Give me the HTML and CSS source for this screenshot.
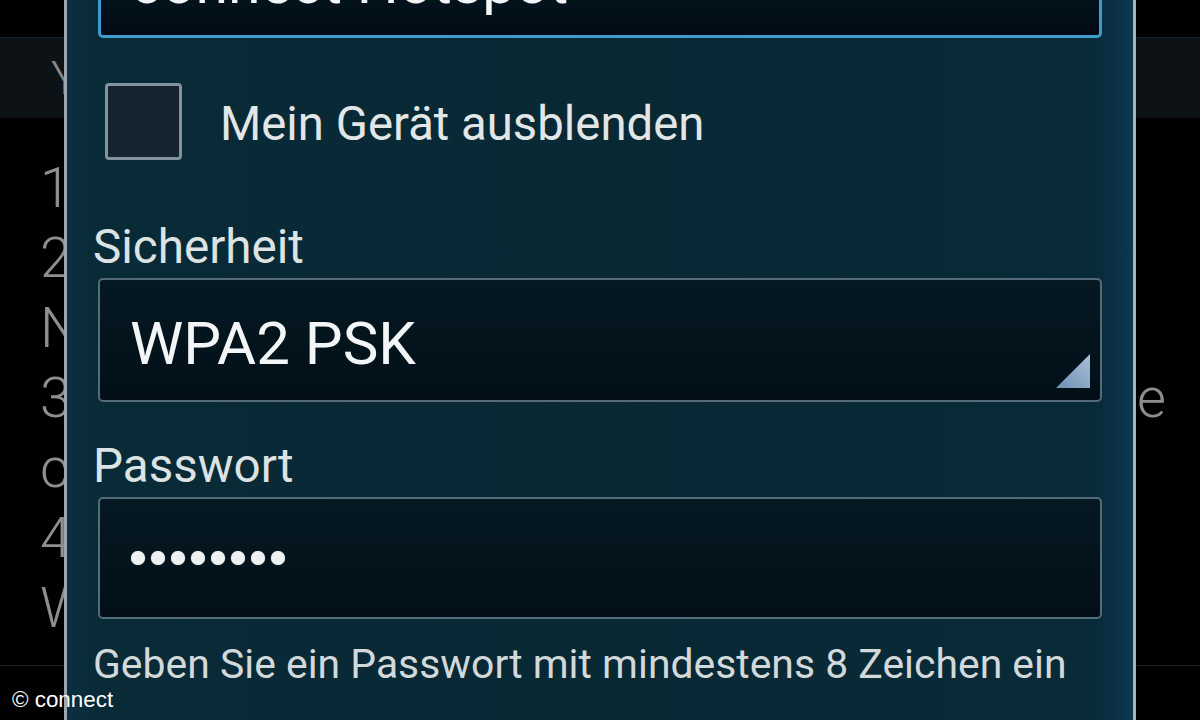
FILE: index.html
```html
<!DOCTYPE html>
<html lang="de">
<head>
<meta charset="utf-8">
<title>Mobiler Hotspot einrichten</title>
<link rel="stylesheet" href="styles.css">
</head>
<body>
<div class="screen">
  <div class="statusbar"></div>
  <div class="actionbar"><span class="ab-title">Y</span></div>
  <ol class="steps">
    <li class="step">1</li>
    <li class="step">2</li>
    <li class="step">N</li>
    <li class="step step-split"><span>3</span><span>e</span></li>
    <li class="step">c</li>
    <li class="step">4</li>
    <li class="step">W</li>
  </ol>
  <div class="bottombar"></div>

  <div class="dialog">
    <div class="field field-focused">connect Hotspot</div>

    <div class="check-row">
      <div class="checkbox"></div>
      <div class="check-label">Mein Gerät ausblenden</div>
    </div>

    <div class="label">Sicherheit</div>
    <div class="field field-spinner">
      WPA2 PSK
      <svg class="spinner-arrow" viewBox="0 0 34 34" width="34" height="34" aria-hidden="true">
        <defs>
          <linearGradient id="tri" x1="0" y1="1" x2="1" y2="0">
            <stop offset="0" stop-color="#6f8fb3"/>
            <stop offset="1" stop-color="#a9c0d8"/>
          </linearGradient>
        </defs>
        <polygon points="34,0 34,34 0,34" fill="url(#tri)"/>
      </svg>
    </div>

    <div class="label label-pw">Passwort</div>
    <div class="field field-pw">
      <div class="dots">
        <span class="dot"></span><span class="dot"></span><span class="dot"></span><span class="dot"></span>
        <span class="dot"></span><span class="dot"></span><span class="dot"></span><span class="dot"></span>
      </div>
    </div>

    <div class="helper">Geben Sie ein Passwort mit mindestens 8 Zeichen ein</div>
  </div>

  <div class="copyright">© connect</div>
</div>
</body>
</html>
```

FILE: styles.css
```css
* {
  box-sizing: border-box;
  margin: 0;
  padding: 0;
}

html,
body {
  width: 1200px;
  height: 720px;
  overflow: hidden;
  background: #000;
}

body {
  font-family: Roboto, "Noto Sans", "DejaVu Sans", sans-serif;
}

.screen {
  position: relative;
  width: 1200px;
  height: 720px;
  overflow: hidden;
  background: #000;
}

/* background page (behind the dialog) */
.statusbar {
  height: 37px;
  background: #000;
}

.actionbar {
  height: 81px;
  background: #0d1216;
  border-top: 1px solid #1d2428;
  display: flex;
  align-items: center;
  padding-left: 51px;
}

.ab-title {
  font-size: 46px;
  font-weight: 300;
  color: #8a8a8a;
}

.steps {
  list-style: none;
  padding: 35px 34px 0 40px;
  font-size: 56px;
  font-weight: 300;
  line-height: 70px;
  color: #8e8e8e;
}

.step {
  display: flex;
  white-space: nowrap;
  height: 70px;
}

.step-split {
  justify-content: space-between;
}

.bottombar {
  margin-top: 22px;
  border-top: 1px solid #1b1e20;
}

/* dialog */
.dialog {
  position: absolute;
  left: 64px;
  top: -100px;
  width: 1072px;
  height: 860px;
  padding: 14px 31px 0;
  border-left: 3px solid #9aa6ac;
  border-right: 3px solid #aab2b6;
  background: linear-gradient(to right, #0c2f42 0px, #092a37 24px, #082834 50%, #092a38 1028px, #0c3652 1066px);
}

.field {
  position: relative;
  height: 124px;
  border: 2px solid #566b78;
  border-radius: 5px;
  background: linear-gradient(#051922, #020f18);
  display: flex;
  align-items: center;
  padding: 6px 0 0 30px;
  font-size: 60px;
  color: #f3f5f6;
  white-space: nowrap;
}

.field-focused {
  border: 3px solid #3d9ccf;
  background: linear-gradient(#04161f 60%, #000a14);
  padding-top: 12px;
  font-size: 59px;
}

.field-pw {
  height: 122px;
  padding-top: 0;
}

.spinner-arrow {
  position: absolute;
  right: 10px;
  bottom: 12px;
}

.check-row {
  display: flex;
  align-items: center;
  margin-top: 45px;
}

.checkbox {
  flex: none;
  width: 77px;
  height: 77px;
  margin-left: 7px;
  border: 3px solid #8293a0;
  border-radius: 4px;
  background: #15232e;
}

.check-label {
  margin-left: 38px;
  padding-top: 4px;
  font-size: 47.3px;
  color: #e2e6e7;
  white-space: nowrap;
}

.label {
  margin: 59px 0 3px -5px;
  font-size: 47.6px;
  line-height: 56px;
  color: #dde2e3;
}

.label-pw {
  margin-top: 36px;
}

.dots {
  display: flex;
  gap: 6.5px;
  padding-left: 1px;
}

.dot {
  width: 13.5px;
  height: 13.5px;
  border-radius: 50%;
  background: #eef1f2;
  box-shadow: 0 0 1px rgba(255, 255, 255, 0.5);
}

.helper {
  margin: 21px 0 0 -5px;
  font-size: 40.9px;
  line-height: 48px;
  color: #d3d9db;
  white-space: nowrap;
}

.copyright {
  position: absolute;
  left: 12px;
  top: 688px;
  z-index: 2;
  font-family: "Liberation Sans", Arial, sans-serif;
  font-size: 22.4px;
  line-height: 24px;
  color: #fff;
}
```
